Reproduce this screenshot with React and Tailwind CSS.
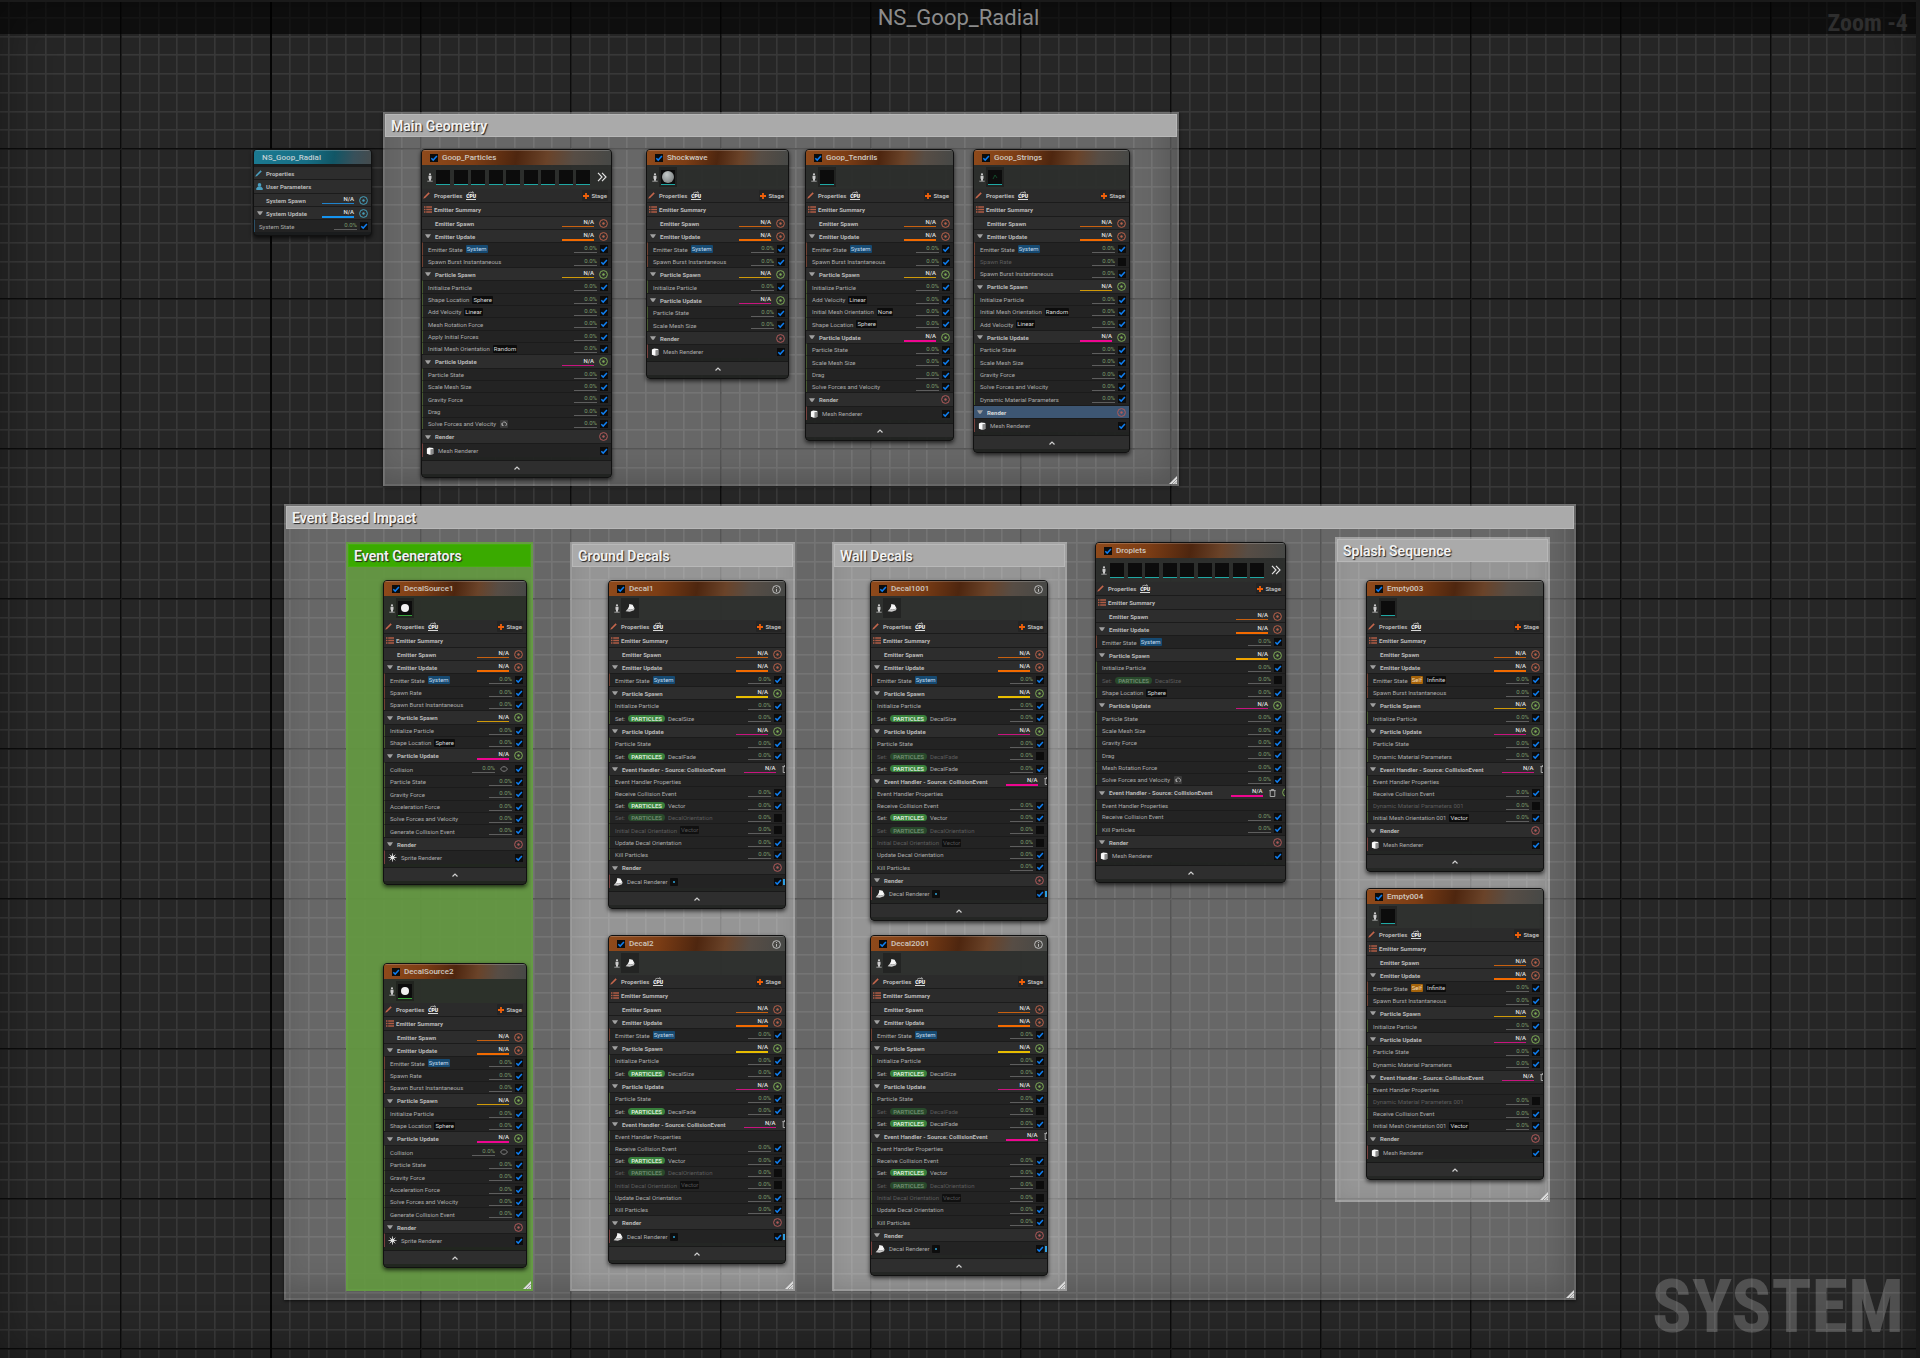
import { useId } from "react";

const emitterSpawn = { kind: "stage", name: "Emitter Spawn", tone: "rust", fixed: true };
const emitterUpdate = { kind: "stage", name: "Emitter Update", tone: "orange" };
const particleSpawn = (tone = "gold") => ({ kind: "stage", name: "Particle Spawn", tone, ring: "green" });
const particleUpdate = (tone = "plum") => ({ kind: "stage", name: "Particle Update", tone, ring: "green" });
const eventHandler = (tone = "plum") => ({ kind: "event", name: "Event Handler - Source: CollisionEvent", tone });
const render = { kind: "stage", name: "Render", ring: "red" };

const e = (name, extra) => ({ kind: "module", name, edge: "rust", ...extra });
const p = (name, extra) => ({ kind: "module", name, edge: "green", ...extra });
const set = (name, off) => ({ kind: "module", name, edge: "green", set: true, off });
const handlerProps = { kind: "module", name: "Event Handler Properties", edge: "green", bare: true };
const emitterState = e("Emitter State", { tag: "System" });
const emitterSelf = e("Emitter State", { self: true, tag: "Infinite" });
const burst = e("Spawn Burst Instantaneous");

const sourceRows = [
  emitterSpawn, emitterUpdate, emitterState, e("Spawn Rate"), burst,
  particleSpawn(), p("Initialize Particle"), p("Shape Location", { tag: "Sphere" }),
  particleUpdate("pink"), p("Collision", { eye: true }), p("Particle State"), p("Gravity Force"),
  p("Acceleration Force"), p("Solve Forces and Velocity"), p("Generate Collision Event"), render,
];

const decalRows = (wall) => [
  emitterSpawn, emitterUpdate, emitterState,
  particleSpawn("yellow"), p("Initialize Particle"), set("DecalSize"),
  particleUpdate(), p("Particle State"), ...(wall ? [set("DecalFade", true)] : []), set("DecalFade"),
  eventHandler(wall ? "pink" : "plum"), handlerProps, p("Receive Collision Event"), set("Vector"),
  set("DecalOrientation", true), p("Initial Decal Orientation", { tag: "Vector", off: true }),
  p("Update Decal Orientation"), p("Kill Particles"), render,
];

const dynamicOff = p("Dynamic Material Parameters 001", { off: true });
const receive = p("Receive Collision Event");
const emptyRows = (pair) => [
  emitterSpawn, emitterUpdate, emitterSelf, burst,
  particleSpawn(), p("Initialize Particle"),
  particleUpdate(), p("Particle State"), p("Dynamic Material Parameters"),
  eventHandler(), handlerProps, ...pair, p("Initial Mesh Orientation 001", { tag: "Vector" }), render,
];

const emitters = [
  {
    name: "Goop_Particles", x: 421, y: 149, w: 191, thumb: "strip", renderer: "Mesh",
    rows: [
      emitterSpawn, emitterUpdate, emitterState, burst,
      particleSpawn(), p("Initialize Particle"), p("Shape Location", { tag: "Sphere" }),
      p("Add Velocity", { tag: "Linear" }), p("Mesh Rotation Force"), p("Apply Initial Forces"),
      p("Initial Mesh Orientation", { tag: "Random" }),
      particleUpdate(), p("Particle State"), p("Scale Mesh Size"), p("Gravity Force"), p("Drag"),
      p("Solve Forces and Velocity", { loop: true }), render,
    ],
  },
  {
    name: "Shockwave", x: 646, y: 149, w: 143, thumb: "sphere", renderer: "Mesh",
    rows: [
      emitterSpawn, emitterUpdate, emitterState, burst, particleSpawn(), p("Initialize Particle"),
      particleUpdate(), p("Particle State"), p("Scale Mesh Size"), render,
    ],
  },
  {
    name: "Goop_Tendrils", x: 805, y: 149, w: 149, thumb: "black", renderer: "Mesh",
    rows: [
      emitterSpawn, emitterUpdate, emitterState, burst, particleSpawn(), p("Initialize Particle"),
      p("Add Velocity", { tag: "Linear" }), p("Initial Mesh Orientation", { tag: "None" }),
      p("Shape Location", { tag: "Sphere" }),
      particleUpdate("pink"), p("Particle State"), p("Scale Mesh Size"), p("Drag"),
      p("Solve Forces and Velocity"), render,
    ],
  },
  {
    name: "Goop_Strings", x: 973, y: 149, w: 157, thumb: "string", renderer: "Mesh",
    rows: [
      emitterSpawn, emitterUpdate, emitterState, e("Spawn Rate", { off: true }), burst,
      particleSpawn(), p("Initialize Particle"), p("Initial Mesh Orientation", { tag: "Random" }),
      p("Add Velocity", { tag: "Linear" }),
      particleUpdate("pink"), p("Particle State"), p("Scale Mesh Size"), p("Gravity Force"),
      p("Solve Forces and Velocity"), p("Dynamic Material Parameters"), { ...render, selected: true },
    ],
  },
  { name: "DecalSource1", x: 383, y: 580, w: 144, thumb: "sprite", renderer: "Sprite", rows: sourceRows },
  { name: "DecalSource2", x: 383, y: 963, w: 144, thumb: "sprite", renderer: "Sprite", rows: sourceRows },
  { name: "Decal1", x: 608, y: 580, w: 178, thumb: "decal", info: true, renderer: "Decal", rows: decalRows(false) },
  { name: "Decal2", x: 608, y: 935, w: 178, thumb: "decal", info: true, renderer: "Decal", rows: decalRows(false) },
  { name: "Decal1001", x: 870, y: 580, w: 178, thumb: "decal", info: true, renderer: "Decal", rows: decalRows(true) },
  { name: "Decal2001", x: 870, y: 935, w: 178, thumb: "decal", info: true, renderer: "Decal", rows: decalRows(true) },
  {
    name: "Droplets", x: 1095, y: 542, w: 191, thumb: "strip", renderer: "Mesh",
    rows: [
      emitterSpawn, emitterUpdate, emitterState,
      particleSpawn("amber"), p("Initialize Particle"), set("DecalSize", true), p("Shape Location", { tag: "Sphere" }),
      particleUpdate(), p("Particle State"), p("Scale Mesh Size"), p("Gravity Force"), p("Drag"),
      p("Mesh Rotation Force"), p("Solve Forces and Velocity", { loop: true }),
      eventHandler("pink"), handlerProps, receive, p("Kill Particles"), render,
    ],
  },
  { name: "Empty003", x: 1366, y: 580, w: 178, thumb: "black", renderer: "Mesh", rows: emptyRows([receive, dynamicOff]) },
  { name: "Empty004", x: 1366, y: 888, w: 178, thumb: "black", renderer: "Mesh", rows: emptyRows([dynamicOff, receive]) },
];

const comments = [
  { title: "Main Geometry", x: 383, y: 112, w: 796, h: 374, outer: true },
  { title: "Event Based Impact", x: 284, y: 504, w: 1292, h: 796, outer: true },
  { title: "Event Generators", x: 346, y: 542, w: 187, h: 749, green: true },
  { title: "Ground Decals", x: 570, y: 542, w: 225, h: 749 },
  { title: "Wall Decals", x: 832, y: 542, w: 235, h: 749 },
  { title: "Splash Sequence", x: 1335, y: 537, w: 215, h: 665 },
];

const barTone = {
  rust: "h-px bg-[#c8600f]",
  orange: "h-[2px] bg-[#f26a00]",
  gold: "h-px bg-[#d09a08]",
  yellow: "h-[2px] bg-[#e8bd00]",
  amber: "h-[2px] bg-[#f0a400]",
  plum: "h-px bg-[#c8147f]",
  pink: "h-[2px] bg-[#ee0690]",
  blue: "h-px bg-[#1f83cc]",
  sky: "h-[2px] bg-[#1593ee]",
};
const ringTone = { rust: "text-[#b9614a]", green: "text-[#7dab55]", red: "text-[#b05a5a]", blue: "text-[#46a0bc]" };
const edgeTone = { rust: "border-l-[#6e4031]", green: "border-l-[#46592f]", red: "border-l-[#77413d]", blue: "border-l-[#2b4f66]" };

function Grid() {
  const minor = [19, 38, 56, 75, 94, 113, 131];
  return (
    <svg className="absolute inset-0 h-full w-full" aria-hidden="true">
      <defs>
        <pattern id="grid" x="120" y="148" width="150" height="150" patternUnits="userSpaceOnUse">
          {minor.map((m) => (
            <g key={m} fill="#383838">
              <rect x={m} y="0" width="1" height="150" />
              <rect x="0" y={m} width="150" height="1" />
              <rect x={m + 1} y="0" width="1" height="150" opacity="0.6" />
              <rect x="0" y={m + 1} width="150" height="1" opacity="0.6" />
            </g>
          ))}
          <rect width="1" height="150" fill="#0c0c0c" />
          <rect width="150" height="1" fill="#0c0c0c" />
          <rect x="1" width="1" height="150" fill="#1c1c1c" />
          <rect y="1" width="150" height="1" fill="#1c1c1c" />
        </pattern>
      </defs>
      <rect width="100%" height="100%" fill="url(#grid)" />
      <rect x="270" width="2" height="100%" fill="#050505" />
    </svg>
  );
}

function Comment({ title, x, y, w, h, outer, green }) {
  return (
    <section
      style={{ left: x, top: y, width: w, height: h }}
      className={`absolute border-2 ${
        green
          ? "border-[#6aa646]/40 bg-[#63993f]/90"
          : outer
            ? "border-transparent bg-white/30 shadow-[inset_-8px_-8px_28px_rgba(0,0,0,0.18),0_1px_3px_rgba(0,0,0,0.6)]"
            : "border-white/10 bg-white/30 shadow-[inset_0_0_16px_rgba(0,0,0,0.08)]"
      }`}
    >
      <h2
        className={`flex h-[23px] items-center border pl-[5px] text-sm font-semibold text-[#f2f2f2] [text-shadow:1px_1px_1px_#222] ${
          green ? "border-[#43ae0c] bg-[#3aaa00]" : "border-[#b8b8b8] bg-[#aaaaaa]"
        }`}
      >
        {title}
      </h2>
      <svg viewBox="0 0 8 8" className="absolute right-0 bottom-0 size-2" aria-hidden="true">
        <path d="M0 8 8 0v8z" fill="#dcdcdc" />
        <path d="M3 8 8 3M5.500 8 8 5.500" stroke="#777" strokeWidth="0.700" />
      </svg>
    </section>
  );
}

function Tick({ label, checked = true, id }) {
  return (
    <span className="grid size-2 shrink-0 bg-[#0c0c0c]">
      <input
        type="checkbox"
        id={id}
        aria-label={id ? undefined : label}
        defaultChecked={checked}
        className="peer col-start-1 row-start-1 size-2 appearance-none"
      />
      <svg viewBox="0 0 8 8" className="pointer-events-none col-start-1 row-start-1 size-2 opacity-0 peer-checked:opacity-100" aria-hidden="true">
        <path d="M1.300 4.200 3.200 6.100 6.900 2" fill="none" stroke="#0f7ef0" strokeWidth="1.500" />
      </svg>
    </span>
  );
}

function Ring({ tone, label }) {
  return (
    <button type="button" aria-label={label} className={`size-[9px] shrink-0 ${ringTone[tone]}`}>
      <svg viewBox="0 0 9 9" className="size-[9px]">
        <circle cx="4.500" cy="4.500" r="3.900" fill="none" stroke="currentColor" strokeWidth="1" />
        <circle cx="4.500" cy="4.500" r="1.200" fill="currentColor" />
      </svg>
    </button>
  );
}

function Arrow({ label }) {
  return (
    <button type="button" aria-label={`Collapse ${label}`} className="size-[6px] shrink-0 text-[#a0a0a0]">
      <svg viewBox="0 0 6 6" className="size-[6px]">
        <path d="M0 1.200h6L3.800 4.800H2.200z" fill="currentColor" />
      </svg>
    </button>
  );
}

function StageCost({ tone }) {
  return (
    <span className="flex w-8 shrink-0 flex-col items-end">
      <span className="h-[7px] text-[6px] leading-[6px] font-medium text-[#e0e0e0]">N/A</span>
      <span className={`w-full ${barTone[tone]}`} />
    </span>
  );
}

function ModuleCost() {
  return (
    <span className="flex w-[23px] shrink-0 flex-col items-end">
      <span className="h-[7px] text-[6px] leading-[6px] text-[#7c9e6c]">0.0%</span>
      <span className="h-px w-full bg-[#5e5e5e]" />
    </span>
  );
}

function Trash() {
  return (
    <button type="button" aria-label="Delete event handler" className="h-2 w-[7px] shrink-0 text-[#b5b5b5]">
      <svg viewBox="0 0 7 8" className="h-2 w-[7px]" fill="none" stroke="currentColor" strokeWidth="0.900">
        <path d="M0.300 1.600h6.400M2.300 1.400V0.500h2.400v0.900M1.200 1.800v5.700h4.600V1.800" />
      </svg>
    </button>
  );
}

const stageRow =
  "flex h-[13px] items-center border-t border-[#1b1b1b] bg-[#2d2d2d] pr-[3px] pl-[3px] text-[6px] font-bold whitespace-nowrap text-[#bababa] [&:nth-child(3n)]:h-[14px]";

function StageRow({ row }) {
  if (row.kind === "event") {
    return (
      <div className={stageRow}>
        <Arrow label={row.name} />
        <span className="mr-[18px] ml-1 shrink-0">{row.name}</span>
        <StageCost tone={row.tone} />
        <span className="ml-[6px] flex shrink-0 items-center gap-[6px]">
          <Trash />
          <Ring tone="green" label="Add module to event handler" />
        </span>
      </div>
    );
  }
  return (
    <div className={row.selected ? `${stageRow} !bg-[#3d5673] !text-[#d8d8d8]` : stageRow}>
      {row.fixed ? <span className="size-[6px]" /> : <Arrow label={row.name} />}
      <span className="ml-1">{row.name}</span>
      <span className="ml-auto flex items-center gap-[5px]">
        {row.tone && <StageCost tone={row.tone} />}
        <Ring tone={row.ring || "rust"} label={`Add module to ${row.name}`} />
      </span>
    </div>
  );
}

function Tag({ children, off }) {
  const color = off
    ? "bg-[#101010] text-[#545454]"
    : children === "System"
      ? "bg-[#164a72] text-[#c5dcec]"
      : children === "Self"
        ? "bg-[#a5630a] text-[#f0dcb8]"
        : "bg-[#0c0c0c] text-[#d8d8d8]";
  return <span className={`h-2 rounded-[1px] px-px text-[6px] leading-[8px] ${color}`}>{children}</span>;
}

function ModuleRow({ row }) {
  const id = useId();
  const height = row.bare
    ? "h-[11px] [&:nth-child(3n)]:h-3"
    : row.eye
      ? "h-[13px] [&:nth-child(3n)]:h-[14px]"
      : "h-3 [&:nth-child(3n)]:h-[13px]";
  return (
    <div
      className={`flex items-center border-t border-l border-t-[#1b1b1b] bg-[#232323] pr-[3px] pl-[5px] text-[6px] whitespace-nowrap ${
        row.off ? "text-[#5c5c5c]" : "text-[#ababab]"
      } ${edgeTone[row.edge]} ${height}`}
    >
      <label htmlFor={row.bare ? undefined : id} className="flex items-center gap-[3px]">
        {row.set && (
          <>
            <span>Set:</span>
            <span
              className={`h-[7px] rounded-full px-[3px] leading-[7px] font-bold ${
                row.off ? "bg-[#28492b] text-[#6a866b]" : "bg-[#38803b] text-[#d2e6d2]"
              }`}
            >
              PARTICLES
            </span>
          </>
        )}
        <span>{row.name}</span>
        {row.self && <Tag>Self</Tag>}
        {row.tag && <Tag off={row.off}>{row.tag}</Tag>}
        {row.loop && (
          <svg viewBox="0 0 8 8" className="ml-px size-2" aria-hidden="true">
            <rect width="8" height="8" rx="1" fill="#3a3a3a" />
            <path d="M2 3v2.500h1.600M2.300 5A2.200 2.200 0 1 1 5.600 6" fill="none" stroke="#aaa" strokeWidth="0.900" />
          </svg>
        )}
      </label>
      {!row.bare && (
        <span className="ml-auto flex items-center gap-[3px]">
          <ModuleCost />
          {row.eye && (
            <svg viewBox="0 0 8 6" className="mr-[4px] ml-[2px] h-[6px] w-2" fill="none" stroke="#8a8a8a" strokeWidth="0.900" aria-hidden="true">
              <path d="M2.600 0.800 0.500 3l2.100 2.200M5.400 0.800 7.500 3 5.400 5.200M2.600 0.800h2.800M2.600 5.200h2.800" />
            </svg>
          )}
          <Tick id={id} checked={!row.off} />
        </span>
      )}
    </div>
  );
}

function RendererIcon({ type }) {
  if (type === "Sprite") {
    return (
      <svg viewBox="0 0 10 10" className="size-[9px]" aria-hidden="true">
        <circle cx="5" cy="5" r="2.300" fill="#fff" />
        <path d="M5 0.500v9M0.500 5h9M1.900 1.900l6.200 6.200M8.100 1.900 1.900 8.100" stroke="#ddd" strokeWidth="0.900" />
      </svg>
    );
  }
  if (type === "Decal") {
    return (
      <svg viewBox="0 0 10 10" className="size-[10px]" aria-hidden="true">
        <path d="M4.300 0.900 7.600 1.700 9.600 5.600 5.600 6.800 2.800 5.700 4 3.400z" fill="#f6f6f6" />
        <path d="M2.800 5.700 5.600 6.800 9.600 5.600 9 7.200 4.800 8.700 0.600 8.300z" fill="#c9c9c9" />
      </svg>
    );
  }
  return (
    <svg viewBox="0 0 9 9" className="size-2" aria-hidden="true">
      <path d="M1 1.600 3.500 0.600 8.200 1v6.800L4.200 8.600 1 7.600z" fill="#fafafa" />
      <path d="M5 2.600 8.200 2v5.800L5 8.500z" fill="#8d8d8d" />
    </svg>
  );
}

function RendererRow({ type }) {
  const id = useId();
  return (
    <div className="flex h-[14px] items-center border-t border-l border-t-[#1b1b1b] border-l-[#77413d] bg-[#232323] pl-[3px] text-[6px] text-[#ababab]">
      <RendererIcon type={type} />
      <label htmlFor={id} className="ml-1">{type} Renderer</label>
      {type === "Decal" && (
        <span className="ml-[3px] grid size-2 place-items-center rounded-[1px] bg-[#0d0d0d]">
          <span className="size-[2px] rounded-full bg-[#2ea3d8]" />
        </span>
      )}
      <span className={`ml-auto flex items-center ${type === "Decal" ? "mr-px" : "mr-[3px]"}`}>
        <Tick id={id} />
      </span>
      {type === "Decal" && <span className="h-[6px] w-[2px] bg-[#2f9fe0]" />}
    </div>
  );
}

function Person() {
  return (
    <svg viewBox="0 0 6 9" className="h-[9px] w-[6px] shrink-0" aria-hidden="true">
      <circle cx="3" cy="1.300" r="1.100" fill="#ccc" />
      <path d="M1.500 2.700h3v3H4v2H2v-2h-.500z" fill="#ccc" />
      <path d="M0.300 8.200h5.400" stroke="#aaa" strokeWidth="0.900" />
    </svg>
  );
}

function Thumb({ children, line = "border-[#1fa8a4]" }) {
  return <span className={`grid h-[15px] w-[14px] shrink-0 place-items-center border-b bg-[#0c0c0c] ${line}`}>{children}</span>;
}

function Thumbnails({ kind }) {
  if (kind === "strip") {
    return (
      <>
        <span className="ml-[3px] flex grow justify-between">
          {Array.from({ length: 9 }, (_, i) => <Thumb key={i} />)}
        </span>
        <button type="button" aria-label="More renderers" className="mr-1 ml-[7px] text-[#e0e0e0]">
          <svg viewBox="0 0 10 10" className="size-[10px]" fill="none" stroke="currentColor" strokeWidth="1.200">
            <path d="M1 0.800 5 5 1 9.200M5 0.800 9 5 5 9.200" />
          </svg>
        </button>
      </>
    );
  }
  return (
    <span className="ml-px grid h-5 w-[18px] place-items-center bg-black/25">
      {kind === "decal" && <RendererIcon type="Decal" />}
      {kind === "sprite" && (
        <Thumb line="border-[#37a33a]"><span className="size-2 rounded-full bg-[#f0f0f0]" /></Thumb>
      )}
      {kind === "black" && <Thumb />}
      {kind === "sphere" && (
        <Thumb><span className="size-3 rounded-full bg-radial-[at_40%_30%] from-[#c4c9c9] to-[#6b7070]" /></Thumb>
      )}
      {kind === "string" && (
        <Thumb>
          <svg viewBox="0 0 6 6" className="size-[6px]" aria-hidden="true">
            <path d="M1 5 3 1l2 3" fill="none" stroke="#14502c" strokeWidth="0.900" />
          </svg>
        </Thumb>
      )}
    </span>
  );
}

function Pencil({ color }) {
  return (
    <svg viewBox="0 0 8 8" className={`size-[7px] ${color}`} aria-hidden="true">
      <path d="M6.400 0.300 7.700 1.600 2.400 6.900 0.300 7.700 1.100 5.600z" fill="currentColor" />
    </svg>
  );
}

function Cpu() {
  return (
    <span className="flex w-[10px] flex-col items-center">
      <svg viewBox="0 0 10 3" className="h-[3px] w-[10px]" aria-hidden="true">
        <path d="M2 2.500C3.500 1 5.500 1 7.500 2.200M6.500 0.300 7.700 2.200" fill="none" stroke="#ddd" strokeWidth="0.700" />
      </svg>
      <span className="w-full border-b border-[#d8d8d8] text-center text-[5px] leading-[5px] font-black text-white">CPU</span>
    </span>
  );
}

function Emitter({ name, x, y, w, thumb, info, renderer, rows }) {
  return (
    <article
      style={{ left: x, top: y, width: w }}
      className="absolute overflow-hidden rounded-[4px] border border-[#111] bg-[#1d201e]/95 shadow-[0_2px_4px_rgba(0,0,0,0.7)]"
    >
      <header className="flex h-[15px] items-center gap-1 border-t border-white/20 bg-[linear-gradient(100deg,#8f4a1b_0%,#7c3d15_28%,#4e260f_50%,#6a4329_66%,#574d45_80%,#464846_100%)] pl-2">
        <Tick label={`Enable ${name}`} />
        <h3 className="text-[8px] leading-[12px] font-medium text-[#cfc8c0]">{name}</h3>
        {info && (
          <button type="button" aria-label={`About ${name}`} className="mr-1 ml-auto text-[#c8c8c8]">
            <svg viewBox="0 0 9 9" className="size-[9px]" fill="none" stroke="currentColor" strokeWidth="0.900">
              <circle cx="4.500" cy="4.500" r="3.900" />
              <path d="M4.500 4v2.800M4.500 2.100v1" />
            </svg>
          </button>
        )}
      </header>
      <div className="flex h-6 items-center bg-white/5 pl-[5px]">
        <Person />
        <Thumbnails kind={thumb} />
      </div>
      <div className="flex h-[13px] items-center bg-[#2b2b2b] pr-[3px] pl-px text-[6px] font-bold text-[#bababa]">
        <Pencil color="text-[#c4664c]" />
        <span className="mr-1 ml-1">Properties</span>
        <Cpu />
        <button type="button" className="ml-auto flex h-[11px] items-center gap-[2px] rounded-[1px] bg-[#242424] px-px">
          <svg viewBox="0 0 6 6" className="size-[6px]" aria-hidden="true">
            <path d="M3 0v6M0 3h6" stroke="#f0600a" strokeWidth="1.800" />
          </svg>
          Stage
        </button>
      </div>
      <div className="flex h-[14px] items-center border-t border-[#1b1b1b] bg-[#2b2b2b] pl-[2px] text-[6px] font-bold text-[#bababa]">
        <svg viewBox="0 0 8 7" className="h-[7px] w-2" aria-hidden="true">
          <path d="M0 1h1.500M2.200 1H8M0 3.500h1.500M2.200 3.500H8M0 6h1.500M2.200 6H8" stroke="#b05c45" strokeWidth="1.300" />
        </svg>
        <span className="ml-[2px]">Emitter Summary</span>
      </div>
      <div>
        {rows.map((row, i) =>
          row.kind === "module" ? <ModuleRow key={i} row={row} /> : <StageRow key={i} row={row} />
        )}
      </div>
      <RendererRow type={renderer} />
      <button
        type="button"
        aria-label={`Collapse ${name}`}
        className="mt-[3px] mb-[3px] flex h-[14px] w-full items-center justify-center border-t border-[#191919] bg-[#2e2e2e] text-[#cfcfcf]"
      >
        <svg viewBox="0 0 6 4" className="h-1 w-[6px]" fill="none" stroke="currentColor" strokeWidth="1.200">
          <path d="M0.500 3.500 3 1l2.500 2.500" />
        </svg>
      </button>
    </article>
  );
}

function SystemNode() {
  const id = useId();
  const row = "flex items-center border-t border-[#1b1b1b] bg-[#2d2d2d] text-[6px] font-bold text-[#bababa]";
  return (
    <article
      style={{ left: 253, top: 149, width: 119 }}
      className="absolute overflow-hidden rounded-[4px] border border-[#111] bg-[#1a1c1d] pb-[3px] shadow-[0_2px_4px_rgba(0,0,0,0.7)]"
    >
      <header className="mb-[2px] flex h-[14px] items-center border-t border-white/20 bg-[linear-gradient(100deg,#1b7a91_0%,#176e85_45%,#115666_68%,#38505a_85%,#454b4d_100%)] pl-2">
        <h3 className="text-[8px] leading-[12px] font-medium text-[#c2d0d4]">NS_Goop_Radial</h3>
      </header>
      <div className={`${row} h-[13px] pl-px`}>
        <Pencil color="text-[#4a9fc0]" />
        <span className="ml-1">Properties</span>
      </div>
      <div className={`${row} h-[14px] pl-[2px]`}>
        <svg viewBox="0 0 7 7" className="size-[7px] text-[#4a9fc0]" aria-hidden="true">
          <circle cx="3.500" cy="1.900" r="1.800" fill="currentColor" />
          <path d="M0.300 7V5.200L2 3.600h3l1.700 1.600V7z" fill="currentColor" />
        </svg>
        <span className="ml-[3px]">User Parameters</span>
      </div>
      <div className={`${row} h-[13px] pr-[3px] pl-3`}>
        System Spawn
        <span className="ml-auto flex items-center gap-[5px]">
          <StageCost tone="blue" />
          <Ring tone="blue" label="Add module to System Spawn" />
        </span>
      </div>
      <div className={`${row} h-[13px] pr-[3px] pl-[3px]`}>
        <Arrow label="System Update" />
        <span className="ml-[3px]">System Update</span>
        <span className="ml-auto flex items-center gap-[5px]">
          <StageCost tone="sky" />
          <Ring tone="blue" label="Add module to System Update" />
        </span>
      </div>
      <div className="flex h-[13px] items-center border-t border-l border-t-[#1b1b1b] border-l-[#2b4f66] bg-[#232323] pr-[3px] pl-1 text-[6px] text-[#ababab]">
        <label htmlFor={id}>System State</label>
        <span className="ml-auto flex items-center gap-[3px]">
          <ModuleCost />
          <Tick id={id} />
        </span>
      </div>
    </article>
  );
}

export default function App() {
  return (
    <main className="relative min-h-screen overflow-hidden bg-[#262626] font-[Roboto,sans-serif]">
      <Grid />
      <div className="absolute inset-0 shadow-[inset_0_0_48px_rgba(0,0,0,0.35)]" />
      <header className="relative flex h-[34px] items-center justify-center border-t-2 border-[#1a1a1a] bg-black/60 pr-[3px]">
        <h1 className="text-[22px] leading-[30px] text-[#8c8c8c]">NS_Goop_Radial</h1>
        <p className="absolute top-[6px] right-3 font-['Roboto_Condensed','Liberation_Sans_Narrow',Roboto,sans-serif] text-2xl leading-[30px] font-bold text-[#2e2e2e]">
          Zoom -4
        </p>
      </header>
      {comments.map((c) => <Comment key={c.title} {...c} />)}
      <SystemNode />
      {emitters.map((n) => <Emitter key={n.name} {...n} />)}
      <p className="absolute right-[16px] bottom-[6px] font-['Roboto_Condensed','Liberation_Sans_Narrow',Roboto,sans-serif] text-[74px] leading-[90px] font-bold text-white/20">
        SYSTEM
      </p>
      <div className="absolute inset-y-0 right-0 w-1 bg-[#191919]" />
    </main>
  );
}
